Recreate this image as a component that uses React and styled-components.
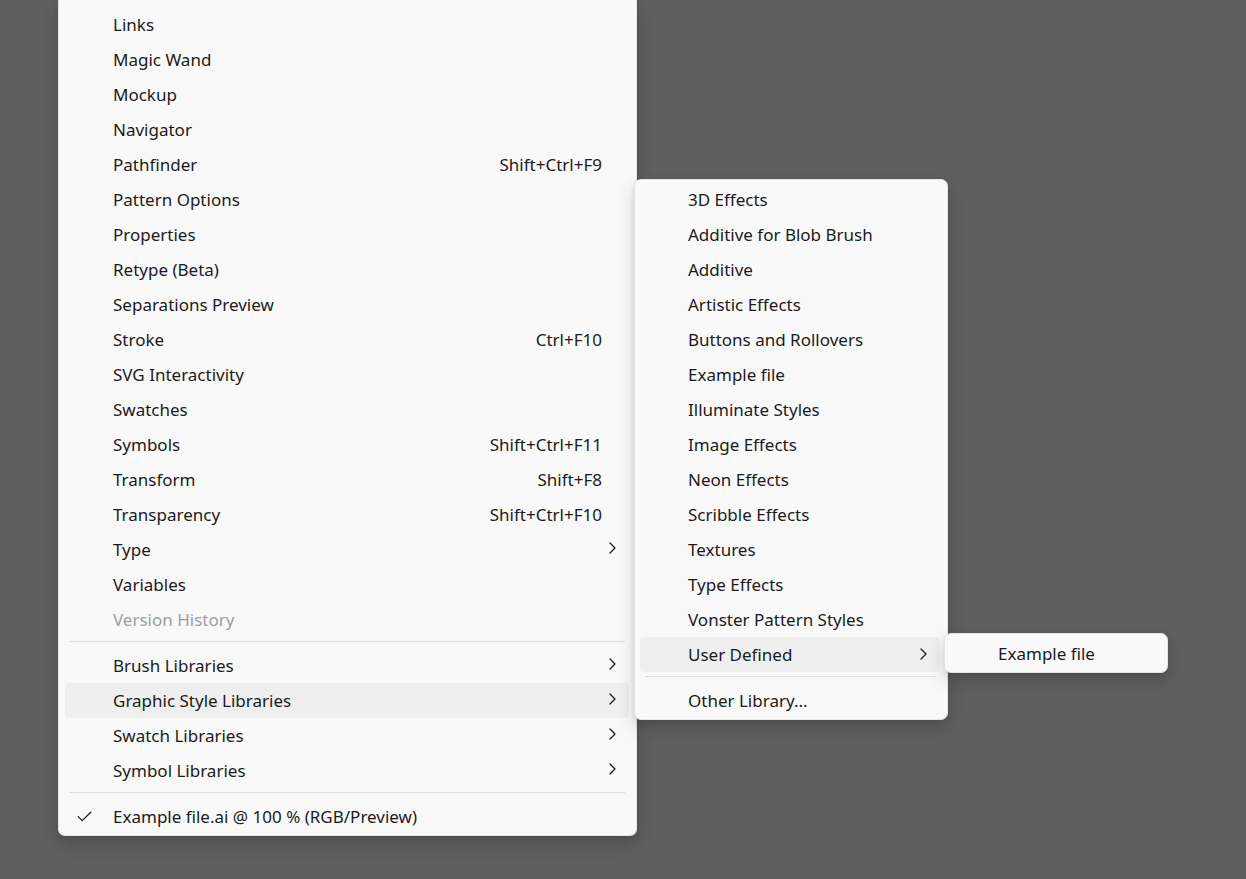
import React from "react";
import styled, { createGlobalStyle } from "styled-components";

const Global = createGlobalStyle`
  html, body { margin: 0; padding: 0; }
  body {
    background: #5f5f5f;
    width: 1246px;
    height: 879px;
    overflow: hidden;
    font-family: "Segoe UI", "Noto Sans", sans-serif;
  }
`;

const Stage = styled.div`
  position: relative;
  display: flex;
  flex-direction: column;
  align-items: flex-start;
  width: 1246px;
  height: 879px;
`;

const Menu = styled.div`
  box-sizing: border-box;
  width: ${(p) => p.$w}px;
  background: #f9f9f9;
  border: 1px solid #e4e4e4;
  border-radius: 7px;
  padding: ${(p) => p.$pad || "2px 6px"};
  box-shadow: 0 8px 18px rgba(0, 0, 0, 0.16), 0 2px 5px rgba(0, 0, 0, 0.08);
  display: flex;
  flex-direction: column;
`;

const MainMenu = styled(Menu)`
  margin-left: 58px;
  border-top: none;
  border-top-left-radius: 0;
  border-top-right-radius: 0;
`;

const Flyout = styled(Menu)`
  position: absolute;
  left: ${(p) => p.$x}px;
  top: ${(p) => p.$y}px;
`;

const Item = styled.div`
  display: grid;
  grid-template-columns: 48px 1fr auto 27px;
  align-items: center;
  height: 35px;
  border-radius: 4px;
  background: ${(p) => (p.$active ? "#efefef" : "transparent")};
  color: ${(p) => (p.$disabled ? "#9e9e9e" : "#1b1b1b")};
  font-size: 17px;
  line-height: 35px;
  white-space: nowrap;
`;

const Lead = styled.span`
  display: flex;
  align-items: center;
  padding-left: 12px;
`;

const Label = styled.span``;

const Shortcut = styled.span`
  text-align: right;
`;

const Tail = styled.span`
  display: flex;
  align-items: center;
  padding-left: 7px;
  margin-top: -2px;
`;

const Separator = styled.div`
  height: 1px;
  background: #dcdcdc;
  margin: 4px 4px 6px 5px;
`;

const Chevron = () => (
  <svg width="7" height="12" viewBox="0 0 7 12" fill="none">
    <path d="M1 1l5 5-5 5" stroke="#1b1b1b" strokeWidth="1.3" strokeLinecap="round" strokeLinejoin="round" />
  </svg>
);

const Check = () => (
  <svg width="15" height="11" viewBox="0 0 15 11" fill="none">
    <path d="M1.2 5.6l4 4L13.8 1.2" stroke="#1b1b1b" strokeWidth="1.3" strokeLinecap="round" strokeLinejoin="round" />
  </svg>
);

const Row = ({ label, shortcut, sub, active, disabled, checked }) => (
  <Item $active={active} $disabled={disabled}>
    <Lead>{checked ? <Check /> : null}</Lead>
    <Label>{label}</Label>
    <Shortcut>{shortcut}</Shortcut>
    <Tail>{sub ? <Chevron /> : null}</Tail>
  </Item>
);

const mainTop = [
  { label: "Links" },
  { label: "Magic Wand" },
  { label: "Mockup" },
  { label: "Navigator" },
  { label: "Pathfinder", shortcut: "Shift+Ctrl+F9" },
  { label: "Pattern Options" },
  { label: "Properties" },
  { label: "Retype (Beta)" },
  { label: "Separations Preview" },
  { label: "Stroke", shortcut: "Ctrl+F10" },
  { label: "SVG Interactivity" },
  { label: "Swatches" },
  { label: "Symbols", shortcut: "Shift+Ctrl+F11" },
  { label: "Transform", shortcut: "Shift+F8" },
  { label: "Transparency", shortcut: "Shift+Ctrl+F10" },
  { label: "Type", sub: true },
  { label: "Variables" },
  { label: "Version History", disabled: true },
];

const mainLibs = [
  { label: "Brush Libraries", sub: true },
  { label: "Graphic Style Libraries", sub: true, active: true },
  { label: "Swatch Libraries", sub: true },
  { label: "Symbol Libraries", sub: true },
];

const styleLibs = [
  "3D Effects",
  "Additive for Blob Brush",
  "Additive",
  "Artistic Effects",
  "Buttons and Rollovers",
  "Example file",
  "Illuminate Styles",
  "Image Effects",
  "Neon Effects",
  "Scribble Effects",
  "Textures",
  "Type Effects",
  "Vonster Pattern Styles",
];

export default function App() {
  return (
    <Stage>
      <Global />
      <MainMenu $w={579} $pad="6.5px 7px 1px 6px">
        {mainTop.map((r) => (
          <Row key={r.label} {...r} />
        ))}
        <Separator />
        {mainLibs.map((r) => (
          <Row key={r.label} {...r} />
        ))}
        <Separator />
        <Row label="Example file.ai @ 100 % (RGB/Preview)" checked />
      </MainMenu>

      <Flyout $x={634} $y={179} $w={314} $pad="2px 7px 1px 5px">
        {styleLibs.map((l) => (
          <Row key={l} label={l} />
        ))}
        <Row label="User Defined" sub active />
        <Separator />
        <Row label="Other Library..." />
      </Flyout>

      <Flyout $x={944} $y={633} $w={224} $pad="2px 6px 1px 5px">
        <Row label="Example file" />
      </Flyout>
    </Stage>
  );
}
